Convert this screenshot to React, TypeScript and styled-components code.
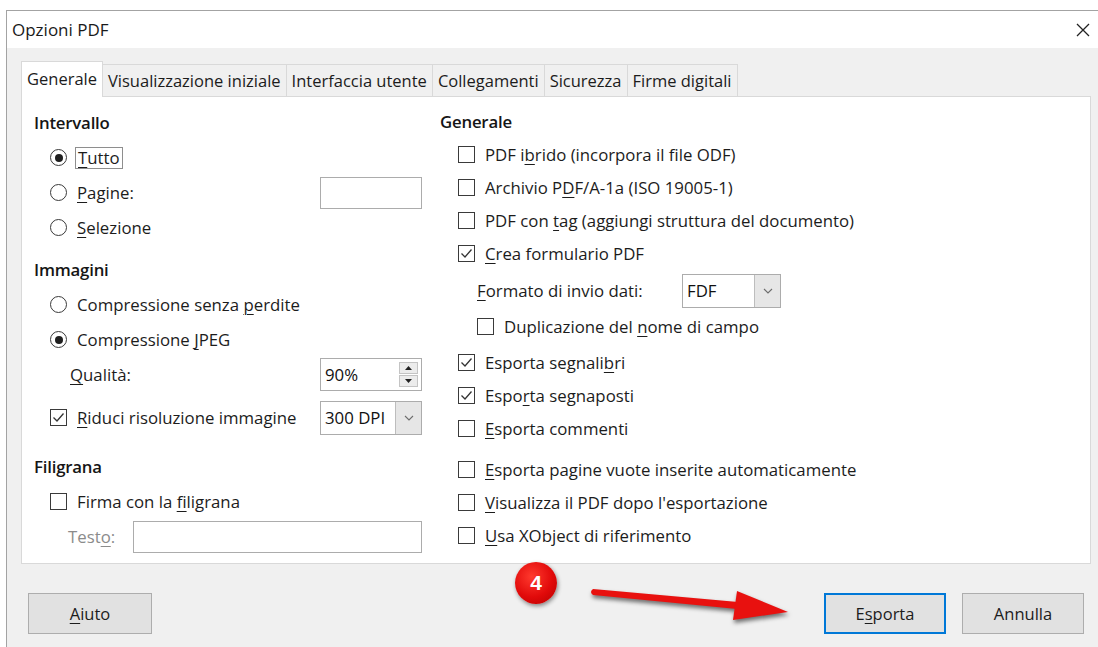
import React from "react";
import styled, { createGlobalStyle, css } from "styled-components";

const GlobalStyle = createGlobalStyle`
  html, body {
    margin: 0;
    padding: 0;
    background: #ffffff;
  }
  body {
    font-family: "Open Sans", "Noto Sans", "Liberation Sans", sans-serif;
    font-size: 16.8px;
    color: #1c1c1c;
  }
  *, *::before, *::after {
    box-sizing: border-box;
  }
`;

const Screen = styled.div`
  position: relative;
  width: 1098px;
  height: 647px;
  overflow: hidden;
  padding: 10px 0 0 6px;
`;

const Window = styled.div`
  height: 100%;
  background: #f0f0f0;
  border-top: 1px solid #a3a3a3;
  border-left: 1px solid #a3a3a3;
  display: flex;
  flex-direction: column;
`;

const TitleBar = styled.div`
  flex: 0 0 37px;
  background: #ffffff;
  display: flex;
  align-items: center;
  justify-content: space-between;
  padding: 0 8px 0 5px;
`;

const Title = styled.span`
  font-size: 17px;
  color: #1a1a1a;
`;

const Body = styled.div`
  flex: 1;
  display: flex;
  flex-direction: column;
  padding: 13px 7px 0 14px;
`;

const TabStrip = styled.div`
  flex: 0 0 35px;
  display: flex;
  align-items: flex-end;
  position: relative;
  z-index: 1;
  font-size: 16.5px;
`;

const Tab = styled.div<{ $active?: boolean }>`
  height: 32px;
  padding: 0 5px;
  display: flex;
  align-items: center;
  white-space: nowrap;
  background: #f0f0f0;
  border: 1px solid #d9d9d9;
  border-bottom: none;
  margin-left: -1px;
  &:first-child {
    margin-left: 0;
  }
  ${(p) =>
    p.$active &&
    css`
      height: 36px;
      margin-bottom: -1px;
      padding-bottom: 3px;
      background: #ffffff;
    `}
`;

const Panel = styled.div`
  flex: 0 0 468px;
  background: #ffffff;
  border: 1px solid #d9d9d9;
  display: grid;
  grid-template-columns: 408px 1fr;
`;

const Column = styled.div<{ $rowH: number; $padLeft: number; $padRight: number }>`
  --row-h: ${(p) => p.$rowH}px;
  display: flex;
  flex-direction: column;
  padding: 8px ${(p) => p.$padRight}px 0 ${(p) => p.$padLeft}px;
`;

const Row = styled.div<{ $indent?: number; $mt?: number }>`
  height: var(--row-h);
  display: flex;
  align-items: center;
  white-space: nowrap;
  padding-left: ${(p) => p.$indent ?? 0}px;
  margin-top: ${(p) => p.$mt ?? 0}px;
`;

const Heading = styled.span`
  font-weight: 600;
  color: #151515;
  letter-spacing: -0.2px;
`;

const Key = styled.span`
  text-decoration: underline;
  text-underline-offset: 3px;
  text-decoration-thickness: 1px;
`;

const OptionText = styled.span`
  margin-left: 10px;
`;

const FocusText = styled.span`
  margin-left: 8px;
  padding: 0 2px;
  line-height: 20px;
  border: 1px solid #8e8e8e;
`;

const FieldLabel = styled.span<{ $muted?: boolean; $width?: number }>`
  color: ${(p) => (p.$muted ? "#8b8b8b" : "#1c1c1c")};
  ${(p) => p.$width && `flex: 0 0 ${p.$width}px;`}
`;

const Box = styled.span`
  flex: 0 0 17px;
  width: 17px;
  height: 17px;
  border: 1px solid #3a3a3a;
  background: #ffffff;
  display: inline-flex;
  align-items: center;
  justify-content: center;
`;

const Ring = styled(Box)`
  border-radius: 50%;
`;

const Dot = styled.span`
  width: 8px;
  height: 8px;
  border-radius: 50%;
  background: #1f1f1f;
`;

/* Fields sit flush right in the left column; $inline keeps them next to their label */
const TextField = styled.div<{ $width: number; $height: number; $inline?: boolean }>`
  margin-left: ${(p) => (p.$inline ? "0" : "auto")};
  flex: 0 0 ${(p) => p.$width}px;
  height: ${(p) => p.$height}px;
  border: 1px solid #acacac;
  background: #ffffff;
  display: flex;
  align-items: stretch;
`;

const FieldValue = styled.span`
  flex: 1;
  display: flex;
  align-items: center;
  padding-left: 4px;
  color: #111;
`;

const SideButton = styled.span`
  flex: 0 0 26px;
  background: #e6e6e6;
  border-left: 1px solid #bdbdbd;
  display: flex;
  align-items: center;
  justify-content: center;
`;

const SpinColumn = styled.span`
  flex: 0 0 26px;
  display: flex;
  flex-direction: column;
  gap: 1px;
  padding: 3px 3px 3px 4px;
`;

const SpinStep = styled.span`
  flex: 1;
  background: #ececec;
  border: 1px solid #c4c4c4;
  display: flex;
  align-items: center;
  justify-content: center;
`;

const ButtonBar = styled.div`
  margin-top: 29px;
  display: flex;
  justify-content: space-between;
  padding: 0 7px;
`;

const ButtonGroup = styled.div`
  display: flex;
  gap: 16px;
`;

const Button = styled.div<{ $default?: boolean; $width: number }>`
  width: ${(p) => p.$width}px;
  height: 41px;
  background: #e1e1e1;
  border: 1px solid #adadad;
  display: flex;
  align-items: center;
  justify-content: center;
  color: #1c1c1c;
  font-size: 16.5px;
  ${(p) =>
    p.$default &&
    css`
      border-color: #0078d7;
      box-shadow: inset 0 0 0 1px #0078d7;
    `}
`;

const Badge = styled.div`
  position: absolute;
  left: 515px;
  top: 562px;
  width: 42px;
  height: 42px;
  border-radius: 50%;
  background: radial-gradient(circle at 40% 35%, #ff3a2e 0%, #e10a0a 55%, #b30000 100%);
  box-shadow: 1px 2px 4px rgba(0, 0, 0, 0.45);
  color: #ffffff;
  font-family: "Liberation Sans", Arial, sans-serif;
  font-weight: 700;
  font-size: 21px;
  display: flex;
  align-items: center;
  justify-content: center;
`;

const ArrowSvg = styled.svg`
  position: absolute;
  left: 580px;
  top: 578px;
  overflow: visible;
  filter: drop-shadow(1px 3px 2px rgba(0, 0, 0, 0.55));
`;

function CloseIcon() {
  return (
    <svg width="14" height="14" viewBox="0 0 14 14">
      <path d="M1 1 L13 13 M13 1 L1 13" stroke="#222" strokeWidth="1.3" fill="none" />
    </svg>
  );
}

function Chevron() {
  return (
    <svg width="10" height="6" viewBox="0 0 10 6">
      <path d="M1 1 L5 5 L9 1" stroke="#6d6d6d" strokeWidth="1.1" fill="none" />
    </svg>
  );
}

function Triangle({ up }: { up?: boolean }) {
  return (
    <svg width="7" height="4" viewBox="0 0 7 4">
      <path d={up ? "M0 4 L3.5 0 L7 4 Z" : "M0 0 L3.5 4 L7 0 Z"} fill="#222" />
    </svg>
  );
}

function CheckBox({ checked }: { checked?: boolean }) {
  return (
    <Box>
      {checked && (
        <svg width="13" height="13" viewBox="0 0 13 13">
          <path d="M1.5 6.5 L5 10 L11.5 2.5" fill="none" stroke="#333" strokeWidth="1.3" />
        </svg>
      )}
    </Box>
  );
}

function Radio({ checked }: { checked?: boolean }) {
  return <Ring>{checked && <Dot />}</Ring>;
}

function Combo({ value, width, inline }: { value: string; width: number; inline?: boolean }) {
  return (
    <TextField $width={width} $height={34} $inline={inline}>
      <FieldValue>{value}</FieldValue>
      <SideButton>
        <Chevron />
      </SideButton>
    </TextField>
  );
}

function Spin({ value }: { value: string }) {
  return (
    <TextField $width={102} $height={33}>
      <FieldValue>{value}</FieldValue>
      <SpinColumn>
        <SpinStep>
          <Triangle up />
        </SpinStep>
        <SpinStep>
          <Triangle />
        </SpinStep>
      </SpinColumn>
    </TextField>
  );
}

const tabs = [
  "Generale",
  "Visualizzazione iniziale",
  "Interfaccia utente",
  "Collegamenti",
  "Sicurezza",
  "Firme digitali",
];

export default function App() {
  return (
    <>
      <GlobalStyle />
      <Screen>
        <Window>
          <TitleBar>
            <Title>Opzioni PDF</Title>
            <CloseIcon />
          </TitleBar>
          <Body>
            <TabStrip>
              {tabs.map((t, i) => (
                <Tab key={t} $active={i === 0}>
                  {t}
                </Tab>
              ))}
            </TabStrip>
            <Panel>
              <Column $rowH={35} $padLeft={12} $padRight={8}>
                <Row>
                  <Heading>Intervallo</Heading>
                </Row>
                <Row $indent={16}>
                  <Radio checked />
                  <FocusText>
                    <Key>T</Key>utto
                  </FocusText>
                </Row>
                <Row $indent={16}>
                  <Radio />
                  <OptionText>
                    <Key>P</Key>agine:
                  </OptionText>
                  <TextField $width={102} $height={32} />
                </Row>
                <Row $indent={16}>
                  <Radio />
                  <OptionText>
                    <Key>S</Key>elezione
                  </OptionText>
                </Row>

                <Row $mt={7}>
                  <Heading>Immagini</Heading>
                </Row>
                <Row $indent={16}>
                  <Radio />
                  <OptionText>
                    Compressione senza <Key>p</Key>erdite
                  </OptionText>
                </Row>
                <Row $indent={16}>
                  <Radio checked />
                  <OptionText>
                    Compressione <Key>J</Key>PEG
                  </OptionText>
                </Row>
                <Row $indent={36}>
                  <FieldLabel>
                    <Key>Q</Key>ualità:
                  </FieldLabel>
                  <Spin value="90%" />
                </Row>
                <Row $indent={16} $mt={8}>
                  <CheckBox checked />
                  <OptionText>
                    <Key>R</Key>iduci risoluzione immagine
                  </OptionText>
                  <Combo value="300 DPI" width={102} />
                </Row>

                <Row $mt={14}>
                  <Heading>Filigrana</Heading>
                </Row>
                <Row $indent={16}>
                  <CheckBox />
                  <OptionText>
                    Firma con la <Key>f</Key>iligrana
                  </OptionText>
                </Row>
                <Row $indent={34}>
                  <FieldLabel $muted>
                    Test<Key>o</Key>:
                  </FieldLabel>
                  <TextField $width={289} $height={32} />
                </Row>
              </Column>

              <Column $rowH={33} $padLeft={10} $padRight={0}>
                <Row>
                  <Heading>Generale</Heading>
                </Row>
                <Row $indent={18}>
                  <CheckBox />
                  <OptionText>
                    PDF i<Key>b</Key>rido (incorpora il file ODF)
                  </OptionText>
                </Row>
                <Row $indent={18}>
                  <CheckBox />
                  <OptionText>
                    Archivio P<Key>D</Key>F/A-1a (ISO 19005-1)
                  </OptionText>
                </Row>
                <Row $indent={18}>
                  <CheckBox />
                  <OptionText>
                    PDF con <Key>t</Key>ag (aggiungi struttura del documento)
                  </OptionText>
                </Row>
                <Row $indent={18}>
                  <CheckBox checked />
                  <OptionText>
                    <Key>C</Key>rea formulario PDF
                  </OptionText>
                </Row>
                <Row $indent={37} $mt={4}>
                  <FieldLabel $width={205}>
                    <Key>F</Key>ormato di invio dati:
                  </FieldLabel>
                  <Combo value="FDF" width={99} inline />
                </Row>
                <Row $indent={37} $mt={3}>
                  <CheckBox />
                  <OptionText>
                    Duplicazione del <Key>n</Key>ome di campo
                  </OptionText>
                </Row>
                <Row $indent={18} $mt={3}>
                  <CheckBox checked />
                  <OptionText>
                    Esporta segnali<Key>b</Key>ri
                  </OptionText>
                </Row>
                <Row $indent={18}>
                  <CheckBox checked />
                  <OptionText>
                    Espo<Key>r</Key>ta segnaposti
                  </OptionText>
                </Row>
                <Row $indent={18}>
                  <CheckBox />
                  <OptionText>
                    <Key>E</Key>sporta commenti
                  </OptionText>
                </Row>
                <Row $indent={18} $mt={8}>
                  <CheckBox />
                  <OptionText>
                    <Key>E</Key>sporta pagine vuote inserite automaticamente
                  </OptionText>
                </Row>
                <Row $indent={18}>
                  <CheckBox />
                  <OptionText>
                    <Key>V</Key>isualizza il PDF dopo l'esportazione
                  </OptionText>
                </Row>
                <Row $indent={18}>
                  <CheckBox />
                  <OptionText>
                    <Key>U</Key>sa XObject di riferimento
                  </OptionText>
                </Row>
              </Column>
            </Panel>

            <ButtonBar>
              <Button $width={124}>
                <span>
                  <Key>A</Key>iuto
                </span>
              </Button>
              <ButtonGroup>
                <Button $width={122} $default>
                  <span>
                    E<Key>s</Key>porta
                  </span>
                </Button>
                <Button $width={122}>Annulla</Button>
              </ButtonGroup>
            </ButtonBar>
          </Body>
        </Window>

        <Badge>4</Badge>
        <ArrowSvg width="215" height="50" viewBox="0 0 215 50">
          <path d="M13 11 L158 24 L157 31 L13 17 Q9 14 13 11 Z" fill="#e8110f" />
          <path d="M157 13 L208 34 L153 42 Z" fill="#e8110f" />
        </ArrowSvg>
      </Screen>
    </>
  );
}
